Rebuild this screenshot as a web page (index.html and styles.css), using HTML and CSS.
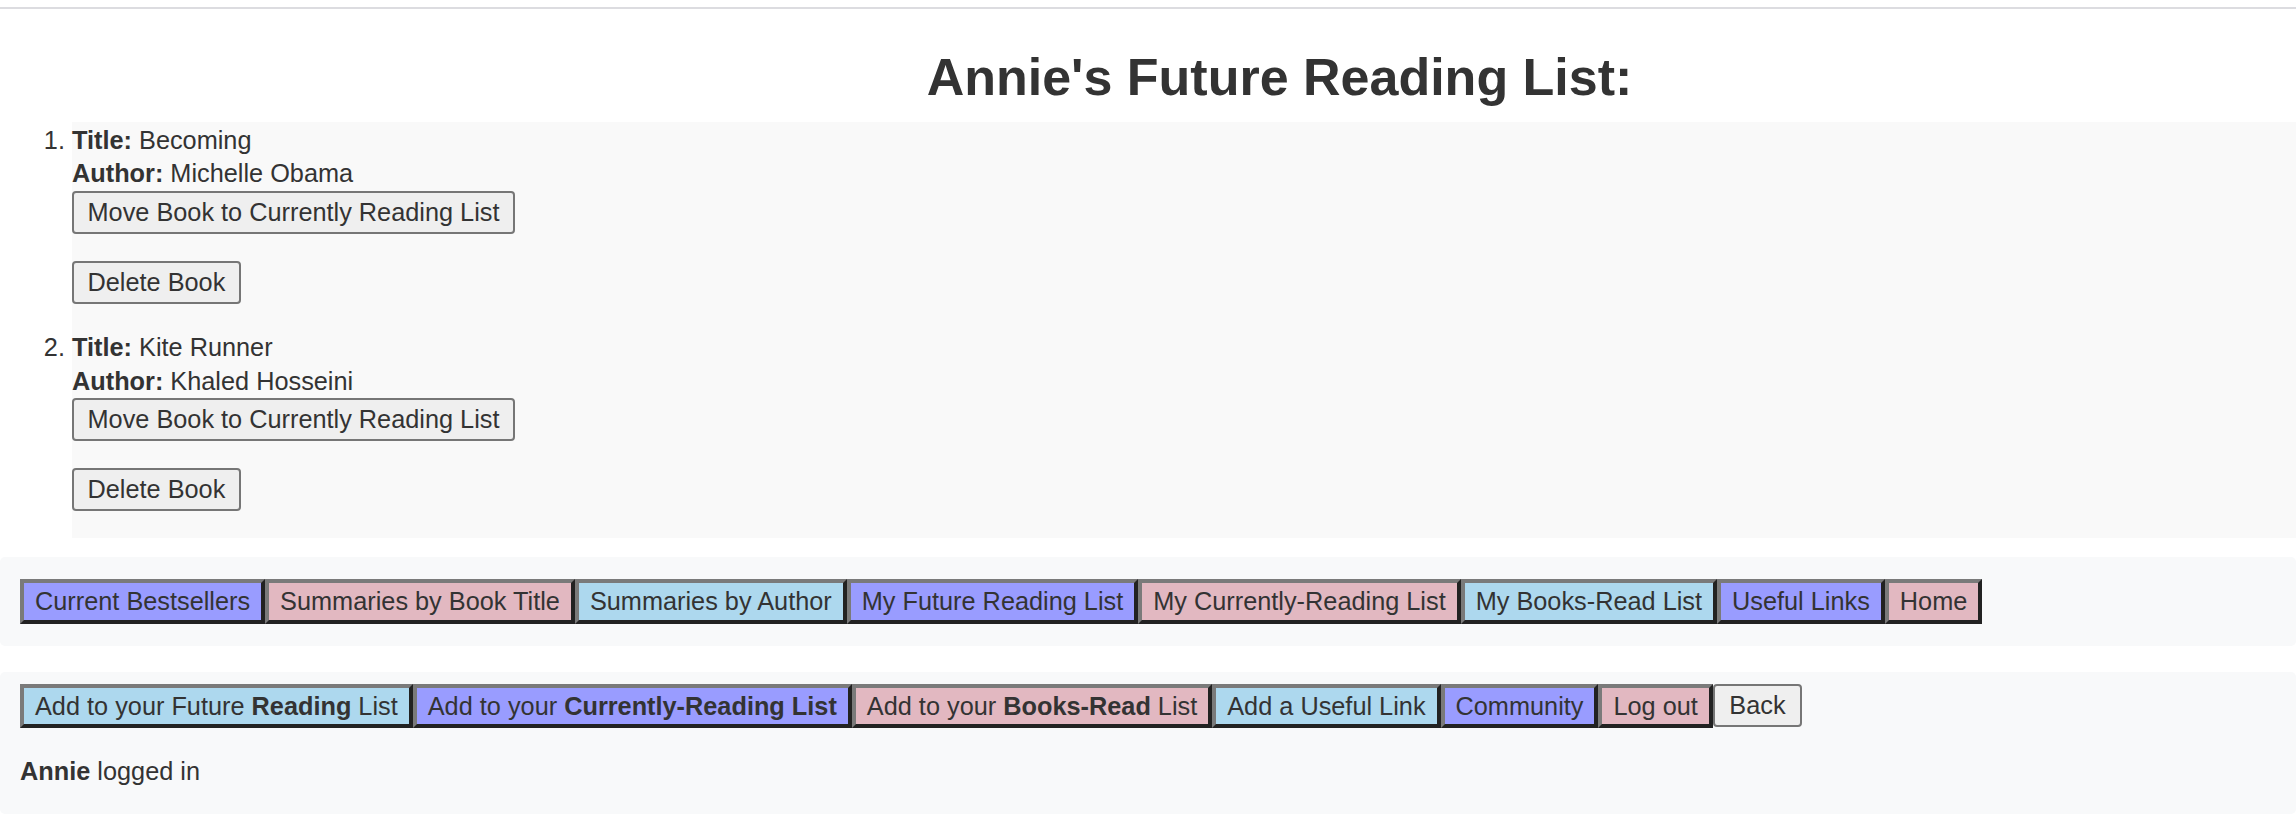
FILE: index.html
```html
<!DOCTYPE html>
<html lang="en">
<head>
<meta charset="utf-8">
<title>Annie's Future Reading List</title>
<link rel="stylesheet" href="styles.css">
</head>
<body>
<div class="topline"></div>
<h1 class="page-title">Annie's Future Reading List:</h1>
<ol class="book-list">
  <li class="book">
    <div class="line"><b>Title:</b> Becoming</div>
    <div class="line"><b>Author:</b> Michelle Obama</div>
    <div class="actions">
      <button class="plain-btn">Move Book to Currently Reading List</button>
      <button class="plain-btn">Delete Book</button>
    </div>
  </li>
  <li class="book">
    <div class="line"><b>Title:</b> Kite Runner</div>
    <div class="line"><b>Author:</b> Khaled Hosseini</div>
    <div class="actions">
      <button class="plain-btn">Move Book to Currently Reading List</button>
      <button class="plain-btn">Delete Book</button>
    </div>
  </li>
</ol>
<nav class="panel panel-nav">
  <div class="btn-row">
    <button class="nav-btn c-purple">Current Bestsellers</button>
    <button class="nav-btn c-pink">Summaries by Book Title</button>
    <button class="nav-btn c-blue">Summaries by Author</button>
    <button class="nav-btn c-purple">My Future Reading List</button>
    <button class="nav-btn c-pink">My Currently-Reading List</button>
    <button class="nav-btn c-blue">My Books-Read List</button>
    <button class="nav-btn c-purple">Useful Links</button>
    <button class="nav-btn c-pink">Home</button>
  </div>
</nav>
<section class="panel panel-user">
  <div class="btn-row">
    <button class="nav-btn c-blue">Add to your Future <b>Reading</b> List</button>
    <button class="nav-btn c-purple">Add to your <b>Currently-Reading List</b></button>
    <button class="nav-btn c-pink">Add to your <b>Books-Read</b> List</button>
    <button class="nav-btn c-blue">Add a Useful Link</button>
    <button class="nav-btn c-purple">Community</button>
    <button class="nav-btn c-pink">Log out</button>
    <button class="plain-btn back-btn">Back</button>
  </div>
  <p class="status"><b>Annie</b> logged in</p>
</section>
</body>
</html>
```
FILE: styles.css
```css
html, body {
  margin: 0;
  padding: 0;
  background: #ffffff;
}

body {
  font-family: "Liberation Sans", Arial, Helvetica, sans-serif;
  font-size: 25.3px;
  color: #333333;
}

.topline {
  height: 2px;
  margin-top: 7px;
  background: #dcdce0;
}

.page-title {
  margin: 38px 0 15px 0;
  padding-left: 263px;
  text-align: center;
  font-size: 52px;
  line-height: 60px;
  font-weight: bold;
  color: #333333;
}

.book-list {
  margin: 0;
  padding: 0 0 0 72px;
}

.book {
  background: #f9f9f9;
  line-height: 33.4px;
}

.book:first-child {
  padding-top: 2px;
}

.actions {
  display: flex;
  flex-direction: column;
  align-items: flex-start;
}

.plain-btn {
  font-family: inherit;
  font-size: 25.3px;
  line-height: 29px;
  color: #333333;
  background: #efefef;
  border: 2px solid #767676;
  border-radius: 4px;
  padding: 5px 13.5px;
  margin: 0;
}

.actions .plain-btn {
  margin-bottom: 27.2px;
}

.panel {
  background: #f8f9fa;
  border-radius: 5px;
}

.panel-nav {
  margin-top: 19px;
  padding: 22px 20px;
}

.panel-user {
  margin-top: 26px;
  padding: 12px 20px 25px 20px;
}

.btn-row {
  display: flex;
  flex-wrap: wrap;
  align-items: flex-start;
}

.nav-btn {
  font-family: inherit;
  font-size: 25.3px;
  line-height: 29px;
  color: #333333;
  padding: 4px 11px;
  margin: 0;
  border-width: 4px;
  border-style: solid;
  border-color: #7a7a7a #222222 #222222 #7a7a7a;
  border-radius: 0;
}

.panel-user .nav-btn {
  padding-top: 3.5px;
  padding-bottom: 3.5px;
}

.nav-btn b {
  font-weight: bold;
}

.c-purple {
  background: #999cff;
}

.c-pink {
  background: #e2b8c1;
}

.c-blue {
  background: #add8ee;
}

.back-btn {
  padding: 5px 14.5px;
  line-height: 29px;
}

.status {
  margin: 27px 0 0 0;
  line-height: 33.4px;
}
```
